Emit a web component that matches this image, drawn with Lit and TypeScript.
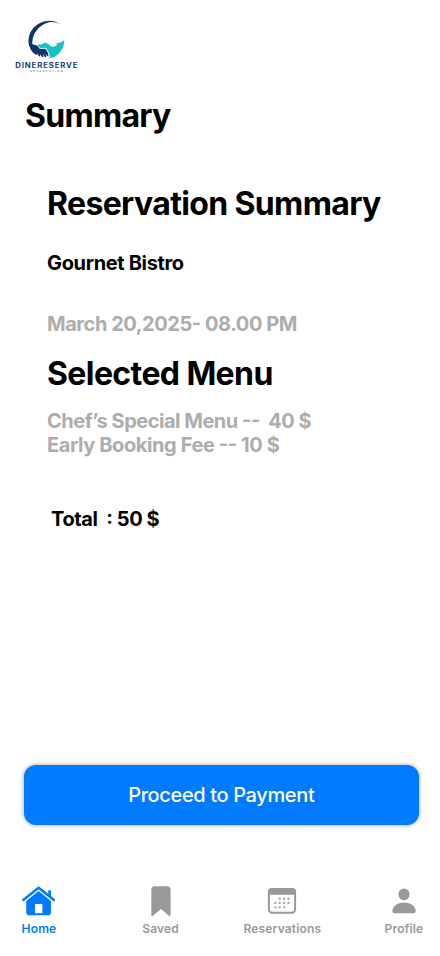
import { LitElement, html, svg, css } from "lit";
import { customElement, property } from "lit/decorators.js";
import { classMap } from "lit/directives/class-map.js";

@customElement("brand-logo")
class BrandLogo extends LitElement {
  static styles = css`
    :host { display: block; width: 74px; height: 64px; }
    svg { display: block; }
    text { font-family: Inter, sans-serif; }
    .name { font-size: 6.9px; font-weight: 650; fill: #173a70; letter-spacing: 0.75px; }
    .sub { font-size: 2.6px; font-weight: 600; fill: #6b7686; }
  `;
  render() {
    return html`<svg width="74" height="64" viewBox="0 0 74 64">
      <path fill="#12326b" d="M50.5 10.6C45.5 6.2 37.5 5.4 30.5 8.7C20.5 13.4 16 24 20 33.5C21 36 22.6 38 24.6 39.8C22.4 35.4 21.7 30.5 22.6 25.5C24.2 16.7 31 9.9 39.3 8.2C43.5 7.5 47.3 8.5 50.5 10.6Z"/>
      <path fill="#12326b" d="M18.7 26.5C20.2 30 23.4 30.6 27.2 31.6L29.4 34.4C31.4 35.2 33.4 34 34.8 34.6C36.6 35.6 38.2 38.6 38.6 41.2C38.5 42.4 37.6 42.4 36.9 41.6L35.6 39.7L36.4 42.3C36.3 43.4 35.2 43.4 34.6 42.4L32.9 39.7L33.6 42.5C33.3 43.6 32.2 43.4 31.6 42.4L30.1 39.7L30.4 41.8C30 42.9 28.9 42.5 28.4 41.6L27.2 39.4L26.6 41C22 38.4 18.4 33.2 18.7 26.5Z"/>
      <path fill="#16c1c8" d="M54.3 26.2C54.1 36.5 47 43.4 39.6 43.8C39.8 40.4 38.2 36.6 36.2 34.4C34.4 32.8 32.6 34.4 30.6 34C28.8 33.4 27.8 31.6 27.6 30.6L31.4 30.6L34.2 28.9C36.8 28.4 38.4 30 40 31.8C42.6 33.5 45.6 32.4 47.4 30.3L45.2 29.8L51.2 28.2Z"/>
      <path fill="none" stroke="#fff" stroke-width=".6" d="M30.6 34.6C32.6 35 34.4 33.4 36 35C37.8 37 39.2 40 39.2 43"/>
      <text class="name" x="5.3" y="53.8" textLength="63" lengthAdjust="spacingAndGlyphs">DINERESERVE</text>
      <text class="sub" x="20.3" y="58.1" textLength="32.5" lengthAdjust="spacing">RESERVATION</text>
    </svg>`;
  }
}

const icons: Record<string, unknown> = {
  home: svg`
    <path fill="none" stroke="currentColor" stroke-width="2.5" stroke-linecap="round" stroke-linejoin="round" d="M3.3 15L18.6 2.7L33.9 15"/>
    <path fill="currentColor" d="M28.2 5.2H31V13L28.2 10.7Z"/>
    <path fill="currentColor" fill-rule="evenodd" d="M18.6 5.9L31 15.9V27.2Q31 30.3 27.9 30.3H9.3Q6.2 30.3 6.2 27.2V15.9ZM15 19V28.3H22.4V19Z"/>`,
  saved: svg`
    <path fill="currentColor" d="M12.6 1.3H25Q28.6 1.3 28.6 4.9V30.2Q28.6 32.2 27 30.7L19 24L10.9 30.7Q9.3 32.2 9.3 30.2V4.9Q9.3 1.3 12.6 1.3Z"/>`,
  reservations: svg`
    <rect x="5.9" y="4.1" width="26.2" height="23.6" rx="3.2" fill="none" stroke="currentColor" stroke-width="2"/>
    <path fill="currentColor" d="M5 9.8V6.6Q5 3.2 8.4 3.2H29.6Q33 3.2 33 6.6V9.8Z"/>
    <g fill="currentColor">
      <circle cx="16.7" cy="13.7" r="1.1"/><circle cx="21.1" cy="13.7" r="1.1"/><circle cx="25.5" cy="13.7" r="1.1"/>
      <circle cx="12.3" cy="17.9" r="1.1"/><circle cx="16.7" cy="17.9" r="1.1"/><circle cx="21.1" cy="17.9" r="1.1"/><circle cx="25.5" cy="17.9" r="1.1"/>
      <circle cx="12.3" cy="22.3" r="1.1"/><circle cx="16.7" cy="22.3" r="1.1"/><circle cx="21.1" cy="22.3" r="1.1"/>
    </g>`,
  profile: svg`
    <ellipse cx="19" cy="9.4" rx="5.5" ry="5.9" fill="currentColor"/>
    <path fill="currentColor" d="M19 17.4C26.1 17.4 30.7 21.6 30.7 25.9Q30.7 28.3 28.4 28.3H9.6Q7.4 28.3 7.4 25.9C7.4 21.6 11.9 17.4 19 17.4Z"/>`,
};

@customElement("nav-item")
class NavItem extends LitElement {
  @property() icon = "home";
  @property() label = "";
  @property({ type: Boolean }) active = false;
  static styles = css`
    :host { display: flex; justify-content: center; width: 34px; }
    .item { display: flex; flex-direction: column; align-items: center; color: #999; }
    .item.active { color: #007aff; }
    svg { display: block; width: 38px; height: 34px; }
    .label { font: 600 12px/16px Inter, sans-serif; letter-spacing: 0.15px; white-space: nowrap; margin-top: 2px; }
  `;
  render() {
    return html`<div class=${classMap({ item: true, active: this.active })}>
      <svg viewBox="0 0 38 34">${icons[this.icon]}</svg>
      <span class="label">${this.label}</span>
    </div>`;
  }
}

@customElement("app-root")
class AppRoot extends LitElement {
  static styles = css`
    :host { display: block; font-family: Inter, sans-serif; }
    .screen { display: flex; flex-direction: column; width: 440px; height: 956px; box-sizing: border-box; background: #fff; overflow: hidden; padding-top: 14px; }
    brand-logo { margin-left: 10px; }
    h1, h2 { margin: 0; font-size: 32px; line-height: 39px; font-weight: 700; letter-spacing: -0.64px; color: #000; white-space: nowrap; }
    h1 { margin: 18px 0 0 25px; letter-spacing: -0.72px; }
    .details { margin: 49px 0 0 47px; font-size: 20px; line-height: 24px; font-weight: 700; letter-spacing: -0.4px; white-space: pre; color: #000; font-feature-settings: "case"; }
    .place { margin-top: 28px; letter-spacing: -0.34px; }
    .date { margin-top: 37px; color: #adadad; letter-spacing: -0.44px; }
    .menu { margin-top: 18px; letter-spacing: -0.6px; }
    .lines { margin-top: 16px; color: #adadad; }
    .dish { letter-spacing: -0.48px; }
    .total { margin: 50px 0 0 4px; }
    .pay { display: block; margin: 233.5px 0 0 24px; width: 394.5px; height: 60.5px; border: 0; padding: 0; border-radius: 12px; background: #007aff; color: #fff; font: 550 20px/60px Inter, sans-serif; letter-spacing: -0.36px; box-shadow: 0 0 4px rgba(0, 0, 0, 0.4); }
    nav { display: flex; justify-content: space-between; margin: 60px 19px 0 22px; }
  `;
  render() {
    return html`<div class="screen">
      <brand-logo></brand-logo>
      <h1>Summary</h1>
      <section class="details">${html`<h2>Reservation Summary</h2><div class="place">Gournet Bistro</div><div class="date">March 20,2025- 08.00 PM</div><h2 class="menu">Selected Menu</h2><div class="lines"><div class="dish">Chef’s Special Menu --  40 $</div><div>Early Booking Fee -- 10 $</div></div><div class="total">Total  : 50 $</div>`}</section>
      <button class="pay">Proceed to Payment</button>
      <nav>
        <nav-item icon="home" label="Home" active></nav-item>
        <nav-item icon="saved" label="Saved"></nav-item>
        <nav-item icon="reservations" label="Reservations"></nav-item>
        <nav-item icon="profile" label="Profile"></nav-item>
      </nav>
    </div>`;
  }
}
